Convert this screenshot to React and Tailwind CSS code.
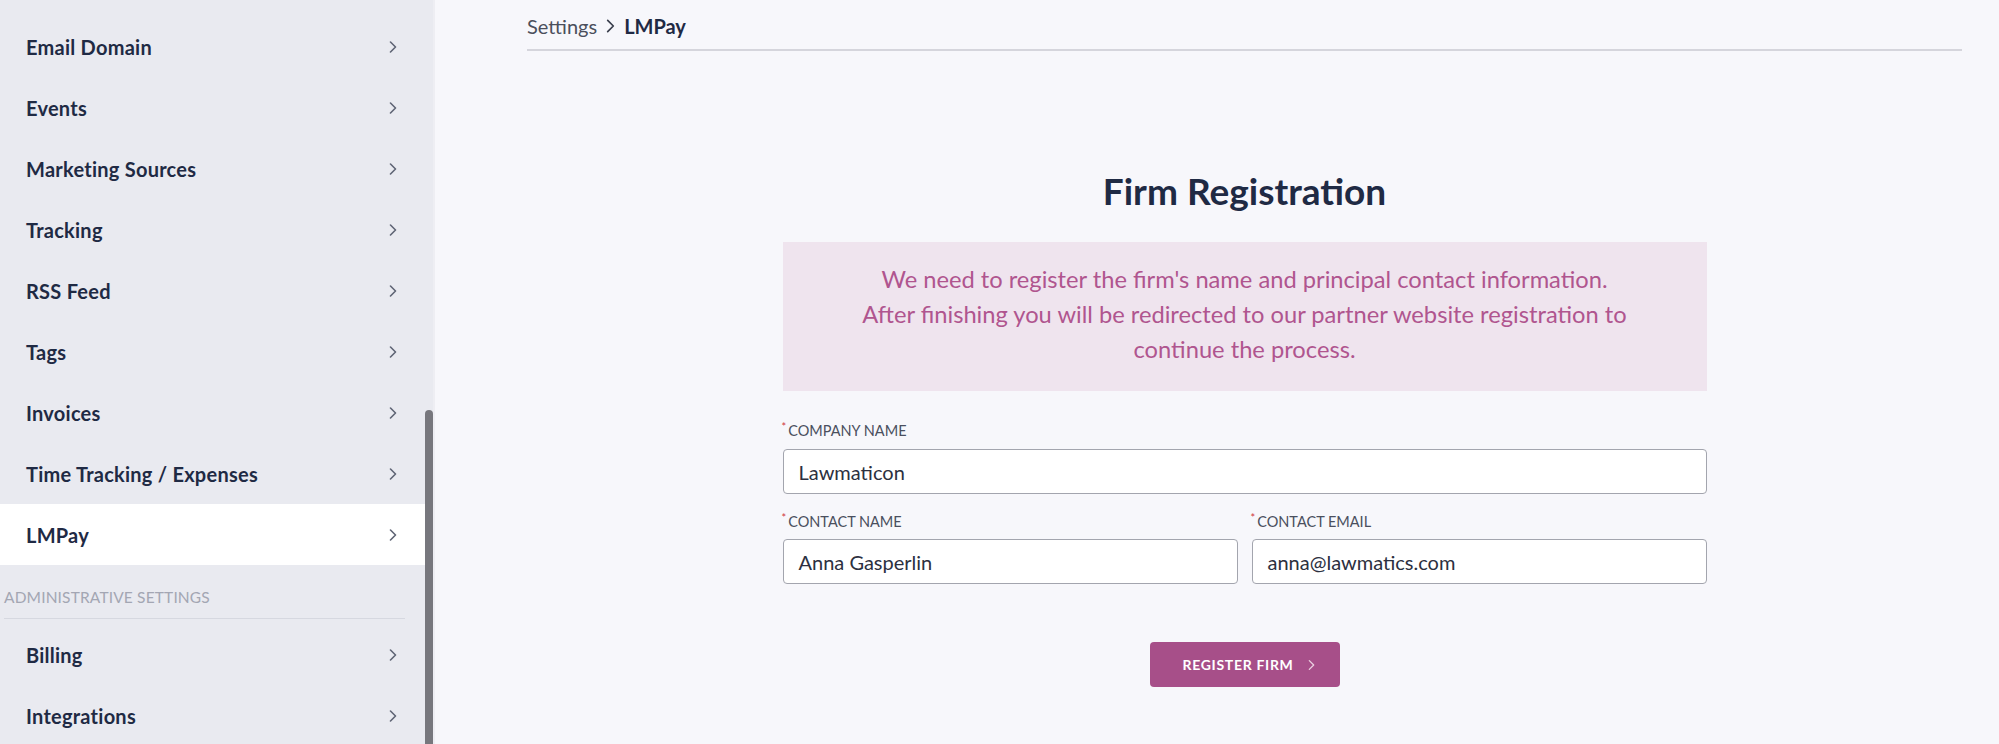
import React from "react";

const Chevron = ({ className = "", color = "#5f6475", w = 8, h = 12, sw = 1.6 }) => (
  <svg width={w} height={h} viewBox="0 0 8 12" fill="none" className={className}>
    <path d="M1.5 1 L6.5 6 L1.5 11" stroke={color} strokeWidth={sw} strokeLinecap="round" strokeLinejoin="round" />
  </svg>
);

const items = [
  "Email Domain",
  "Events",
  "Marketing Sources",
  "Tracking",
  "RSS Feed",
  "Tags",
  "Invoices",
  "Time Tracking / Expenses",
  "LMPay",
];

const Row = ({ label, active }) => (
  <div
    className={`flex h-[61px] items-center justify-between pl-[26px] pr-[28px] ${
      active ? "bg-white" : ""
    }`}
  >
    <span className="text-[20px] font-bold tracking-[0.25px] text-[#1f2a44]">{label}</span>
    <Chevron />
  </div>
);

const Label = ({ children }) => (
  <div className="flex items-start h-[18px] text-[14.5px] leading-[18px] text-[#4a4f5e] uppercase">
    <span className="text-[#d0343c] text-[11px] leading-[11px] mr-[2px] -ml-[1px] -mt-[1px]">*</span>
    <span>{children}</span>
  </div>
);

const Input = ({ value }) => (
  <div className="h-[45px] w-full flex items-center rounded-[4px] border border-[#a3a5ae] bg-white px-[15px] text-[20px] text-[#2c3040]">
    {value}
  </div>
);

export default function App() {
  return (
    <div
      className="flex h-[744px] w-[1999px] overflow-hidden bg-[#f7f7fb]"
      style={{ fontFamily: "Lato, 'Noto Sans', sans-serif" }}
    >
      {/* Sidebar */}
      <div className="flex w-[435px] shrink-0 bg-[#e9eaf0]">
        <div className="w-[425px] pt-[16px]">
          {items.map((it) => (
            <Row key={it} label={it} active={it === "LMPay"} />
          ))}
          <div className="pl-[4px] pr-[20px] pt-[22px]">
            <div className="text-[15.5px] leading-[20px] text-[#a3a6b3] uppercase tracking-[0.01em]">
              Administrative Settings
            </div>
            <div className="mt-[11px] h-px bg-[#d6d8e0]" />
          </div>
          <div className="pt-[5px]">
            <Row label="Billing" />
            <Row label="Integrations" />
          </div>
        </div>
        <div className="flex w-[8px] flex-col">
          <div className="h-[410px]" />
          <div className="flex-1 rounded-t-[4px] bg-[#77777d]" />
        </div>
        <div className="w-[2px] bg-[#eeeef3]" />
      </div>

      {/* Main */}
      <div className="flex-1 pl-[92px] pr-[37px]">
        <div className="flex items-center gap-[9px] border-b-2 border-[#d5d5dc] pt-[14px] pb-[11px] text-[20px] leading-[24px]">
          <span className="text-[#4b4f5c]">Settings</span>
          <Chevron color="#3a3f4d" w={9} h={14} sw={1.5} />
          <span className="font-bold text-[#1f2a44]">LMPay</span>
        </div>

        <div className="mx-auto w-[924px]">
          <h1 className="mt-[118px] text-center text-[37px] font-bold leading-[44px] text-[#1f2a44]">
            Firm Registration
          </h1>

          <div className="mt-[29px] bg-[#efe4ee] pt-[20px] pb-[24px] text-center text-[23.7px] leading-[35px] text-[#b0558f]">
            We need to register the firm's name and principal contact information.
            <br />
            After finishing you will be redirected to our partner website registration to
            <br />
            continue the process.
          </div>

          <div className="mt-[31px]">
            <Label>Company Name</Label>
            <div className="mt-[9px]">
              <Input value="Lawmaticon" />
            </div>
          </div>

          <div className="mt-[19px] grid grid-cols-2 gap-[14px]">
            <div>
              <Label>Contact Name</Label>
              <div className="mt-[8px]">
                <Input value="Anna Gasperlin" />
              </div>
            </div>
            <div>
              <Label>Contact Email</Label>
              <div className="mt-[8px]">
                <Input value="anna@lawmatics.com" />
              </div>
            </div>
          </div>

          <div className="mt-[58px] flex justify-center">
            <button className="flex h-[45px] w-[190px] items-center justify-center gap-[14px] rounded-[4px] bg-[#a74f89] pl-[8px] text-[14px] font-bold uppercase tracking-[0.05em] text-white">
              <span>Register Firm</span>
              <Chevron color="#ead0e0" w={7} h={12} sw={1.5} />
            </button>
          </div>
        </div>
      </div>
    </div>
  );
}
